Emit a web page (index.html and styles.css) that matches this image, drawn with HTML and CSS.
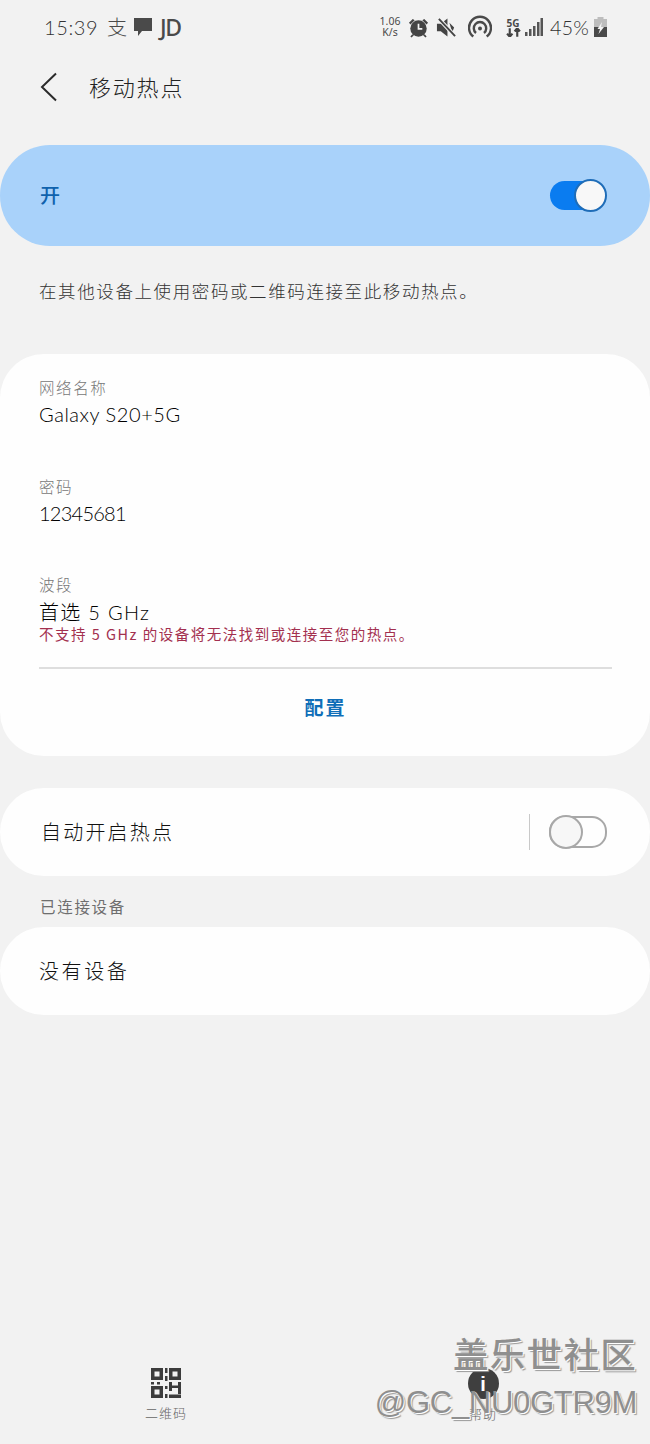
FILE: index.html
```html
<!DOCTYPE html>
<html lang="zh-CN">
<head>
<meta charset="utf-8">
<title>移动热点</title>
<link rel="stylesheet" href="styles.css">
</head>
<body>
<div class="phone">
  <div class="status">
    <div class="status-left">
      <span class="time">15:39</span>
      <span class="st-zhi">支</span>
      <svg class="ic-msg" viewBox="0 0 20 20"><path d="M1 1h18v13H9l-4 5v-5H1z" fill="#4a4a4a"/></svg>
      <span class="st-jd">JD</span>
    </div>
    <div class="status-right">
      <div class="speed"><span>1.06</span><span>K/s</span></div>
      <svg class="ic-alarm" viewBox="0 0 22 22"><g fill="#444"><circle cx="11" cy="12" r="8.6"/><path d="M1 6l4-4 2 1.4-4.400 4.400zM21 6l-4-4-2 1.400 4.400 4.400z"/><path d="M4.500 18l-2 2.500 1.200 1 2.500-2.400zM17.500 18l2 2.500-1.200 1-2.500-2.400z"/></g><path d="M11 7v5.500h4" fill="none" stroke="#f2f2f2" stroke-width="1.800"/></svg>
      <svg class="ic-mute" viewBox="0 0 22 22"><path d="M1 7h4l7-5.500v19L5 15H1z" fill="#444"/><path d="M14 6l5 5-2 5z" fill="#444"/><path d="M3 2l17 18" stroke="#f2f2f2" stroke-width="4"/><path d="M3 2l17 18" stroke="#444" stroke-width="2"/></svg>
      <svg class="ic-hot" viewBox="0 0 24 24" fill="none" stroke="#4a4a4a" stroke-width="2.400"><path d="M5.300 21.500a11 11 0 1 1 13.400 0"/><path d="M8 18a6.200 6.200 0 1 1 8 0"/><circle cx="12" cy="13.500" r="2" fill="#4a4a4a" stroke="none"/></svg>
      <div class="net"><span>5G</span><svg viewBox="0 0 14 8"><path d="M3.500 0v8M1 5L3.500 8 6 5M10.500 8V0M8 3L10.500 0 13 3" fill="none" stroke="#444" stroke-width="2"/></svg></div>
      <svg class="ic-signal" viewBox="0 0 18 18"><g fill="#555"><rect x="0" y="14" width="2.500" height="4"/><rect x="4" y="11" width="2.500" height="7"/><rect x="8" y="8" width="2.500" height="10"/><rect x="12" y="4" width="2.500" height="14"/><rect x="15.500" y="0" width="2.500" height="18"/></g></svg>
      <span class="batt-pct">45%</span>
      <svg class="ic-batt" viewBox="0 0 13 20"><path d="M3.500 0h6v2H13v18H0V2h3.500z" fill="#bdbdbd"/><path d="M0 10h13v10H0z" fill="#4a4a4a"/><path d="M8 5L3.500 12H6l-1.500 5L10 10H7z" fill="#f2f2f2"/></svg>
    </div>
  </div>

  <header class="topbar">
    <svg class="back" viewBox="0 0 18 30"><path d="M16 1.500L2 15l14 13.500" fill="none" stroke="#2b2b2b" stroke-width="2"/></svg>
    <h1 class="title">移动热点</h1>
  </header>

  <section class="master">
    <span class="master-label">开</span>
    <span class="switch switch-on"><span class="knob"></span></span>
  </section>

  <p class="hint">在其他设备上使用密码或二维码连接至此移动热点。</p>

  <section class="card config">
    <div class="field">
      <div class="f-label">网络名称</div>
      <div class="f-value">Galaxy S20+5G</div>
    </div>
    <div class="field">
      <div class="f-label">密码</div>
      <div class="f-value f-digits">12345681</div>
    </div>
    <div class="field field-last">
      <div class="f-label">波段</div>
      <div class="f-value f-band">首选 5 GHz</div>
      <div class="f-warn">不支持 5 GHz 的设备将无法找到或连接至您的热点。</div>
    </div>
    <div class="divider"></div>
    <div class="action">配置</div>
  </section>

  <section class="card row auto">
    <span class="row-text row-auto">自动开启热点</span>
    <span class="vline"></span>
    <span class="switch switch-off"><span class="knob"></span></span>
  </section>

  <div class="sub">已连接设备</div>

  <section class="card row">
    <span class="row-text">没有设备</span>
  </section>

  <nav class="bottom">
    <div class="tab tab-qr">
      <svg class="ic-qr" viewBox="0 0 30 30"><g fill="#3c3c3c"><path fill-rule="evenodd" d="M0 0h12v12H0zM3.500 3.500v5h5v-5z"/><path fill-rule="evenodd" d="M18 0h12v12H18zM21.500 3.500v5h5v-5z"/><path fill-rule="evenodd" d="M0 18h12v12H0zM3.500 21.500v5h5v-5z"/><rect x="14" y="0" width="2.500" height="5"/><rect x="14" y="8" width="2.500" height="5"/><rect x="0" y="14" width="3" height="2.500"/><rect x="6" y="14" width="3" height="2.500"/><rect x="18" y="14" width="3" height="9"/><rect x="27" y="14" width="3" height="12"/><rect x="18" y="17.500" width="9" height="2.500"/><rect x="14" y="18" width="2.500" height="3"/><rect x="14" y="26" width="2.500" height="4"/><rect x="18" y="26.500" width="12" height="3.500"/></g></svg>
      <span class="tab-label">二维码</span>
    </div>
    <div class="tab tab-help">
      <span class="help-ic"><span class="help-i">i</span></span>
      <span class="tab-label">帮助</span>
    </div>
  </nav>

  <div class="watermark">
    <div class="wm-top">盖乐世社区</div>
    <div class="wm-bot">@GC_NU0GTR9M</div>
  </div>
</div>
</body>
</html>
```

FILE: styles.css
```css
* { box-sizing: border-box; }
html, body { margin: 0; padding: 0; }
body {
  background: #f2f2f2;
  font-family: "Noto Sans CJK SC", "Noto Sans", sans-serif;
  color: #222;
}
.phone { position: relative; width: 650px; height: 1444px; overflow: hidden; display: flex; flex-direction: column; }

.status { height: 54px; display: flex; justify-content: space-between; align-items: center; padding: 0 43px 0 44px; color: #4a4a4a; }
.status-left, .status-right { display: flex; align-items: center; }
.time { font: 300 20px/24px Lato, sans-serif; letter-spacing: .6px; width: 63px; color: #333; }
.st-zhi { font-size: 20px; line-height: 24px; width: 26px; font-weight: 300; }
.ic-msg { width: 20px; height: 20px; margin-right: 7px; }
.st-jd { font: 500 23px/24px "Noto Sans", sans-serif; letter-spacing: -1.5px; }
.speed { display: flex; flex-direction: column; align-items: center; font: 400 10.500px/11px "Noto Sans", sans-serif; width: 24px; margin-right: 6px; }
.ic-alarm { width: 21px; height: 21px; margin-right: 7px; }
.ic-mute { width: 21px; height: 21px; margin-right: 11px; }
.ic-hot { width: 24px; height: 24px; margin-right: 13px; }
.net { display: flex; flex-direction: column; align-items: center; width: 16px; margin-right: 4px; font: 700 10px/10px "Noto Sans", sans-serif; }
.net svg { width: 15px; height: 9px; }
.ic-signal { width: 18px; height: 18px; margin-right: 7px; }
.batt-pct { font: 300 20px/24px Lato, sans-serif; width: 44px; color: #333; }
.ic-batt { width: 13px; height: 20px; }

.topbar { height: 67px; display: flex; align-items: center; padding: 0 0 0 40px; }
.back { width: 18px; height: 30px; margin-right: 31px; margin-top: -2px; }
.title { margin: 0 0 4px; font-size: 22px; line-height: 30px; font-weight: 300; letter-spacing: 1.800px; color: #222; }

.master { margin-top: 24px; height: 101px; border-radius: 50px; background: #a9d2fa; display: flex; justify-content: space-between; align-items: center; padding: 0 44px 0 40px; }
.master-label { font-size: 20px; line-height: 26px; font-weight: 500; color: #0f62ad; margin-top: -2px; }

.switch { position: relative; display: block; width: 58px; height: 30px; border-radius: 15px; }
.switch-on { background: #0a7cf0; height: 29px; width: 56px; }
.switch-on .knob { position: absolute; right: -1px; top: -2px; width: 33px; height: 33px; border-radius: 50%; background: #f8f8f8; border: 2px solid #1f6db8; }
.switch-off { border: 2px solid #a8a8a8; height: 32px; width: 58px; }
.switch-off .knob { position: absolute; left: -2px; top: -3px; width: 34px; height: 34px; border-radius: 50%; background: #f7f7f7; border: 2px solid #a8a8a8; }

.hint { margin: 31px 0 0; padding-left: 39px; font-size: 17.500px; line-height: 28px; font-weight: 300; color: #333; letter-spacing: 1.600px; height: 28px; white-space: nowrap; }

.card { background: #fefefe; }
.config { margin-top: 49px; height: 402px; border-radius: 44px; padding: 21px 38px 0 39px; display: flex; flex-direction: column; }
.field { height: 98.500px; flex: none; }
.field-last { height: 76px; }
.f-label { font-size: 15.500px; line-height: 24px; font-weight: 300; color: #777; letter-spacing: 1.600px; }
.f-value { font: 300 20px/28px Lato, "Noto Sans CJK SC", sans-serif; color: #000; letter-spacing: .55px; margin-top: 1px; }
.f-digits { letter-spacing: -.75px; }
.f-band { line-height: 30px; letter-spacing: 1.300px; }
.f-warn { font-size: 14.500px; line-height: 16px; font-weight: 400; color: #a3304f; letter-spacing: 1.500px; margin-top: -1px; white-space: nowrap; }
.divider { height: 2px; background: #dedede; margin-top: 19px; width: 573px; flex: none; }
.action { font-size: 19px; line-height: 26px; font-weight: 700; color: #0f6eb8; text-align: center; margin-top: 25px; letter-spacing: 2px; }

.row { height: 88px; border-radius: 44px; display: flex; align-items: center; padding: 0 43px 0 39px; }
.auto { margin-top: 32px; }
.row-text { font-size: 20px; line-height: 28px; font-weight: 300; color: #111; letter-spacing: 2.600px; flex: 1; }
.row-auto { padding-left: 2px; letter-spacing: 2.200px; }
.vline { width: 1px; height: 36px; background: #c9c9c9; margin-right: 19px; }

.sub { height: 51px; padding: 18px 0 0 40px; font-size: 15.500px; line-height: 24px; font-weight: 400; color: #6e6e6e; letter-spacing: 1.700px; }

.bottom { position: relative; margin-top: 353px; display: flex; height: 54px; }
.tab { position: absolute; top: 0; display: flex; flex-direction: column; align-items: center; }
.tab-qr { left: 126px; width: 80px; }
.tab-help { left: 443px; width: 80px; }
.ic-qr { width: 30px; height: 30px; display: block; }
.tab-label { font-size: 13px; line-height: 18px; font-weight: 300; color: #666; margin-top: 6px; letter-spacing: 1px; }
.help-ic { width: 31px; height: 31px; border-radius: 50%; background: #3f3f3f; display: flex; justify-content: center; align-items: center; }
.help-i { color: #fff; font: 700 20px/20px "Liberation Sans", sans-serif; }

.watermark { position: absolute; right: 13px; top: 1332px; text-align: right; color: #8f8f8f; text-shadow: 1px 1px 0 #fff, 2px 2px 1px #9a9a9a; }
.wm-top { font-size: 35.500px; line-height: 42px; font-weight: 500; letter-spacing: 1.300px; }
.wm-bot { font: 400 31px/38px "Liberation Sans", sans-serif; margin-top: 10px; letter-spacing: -.3px; }
```
